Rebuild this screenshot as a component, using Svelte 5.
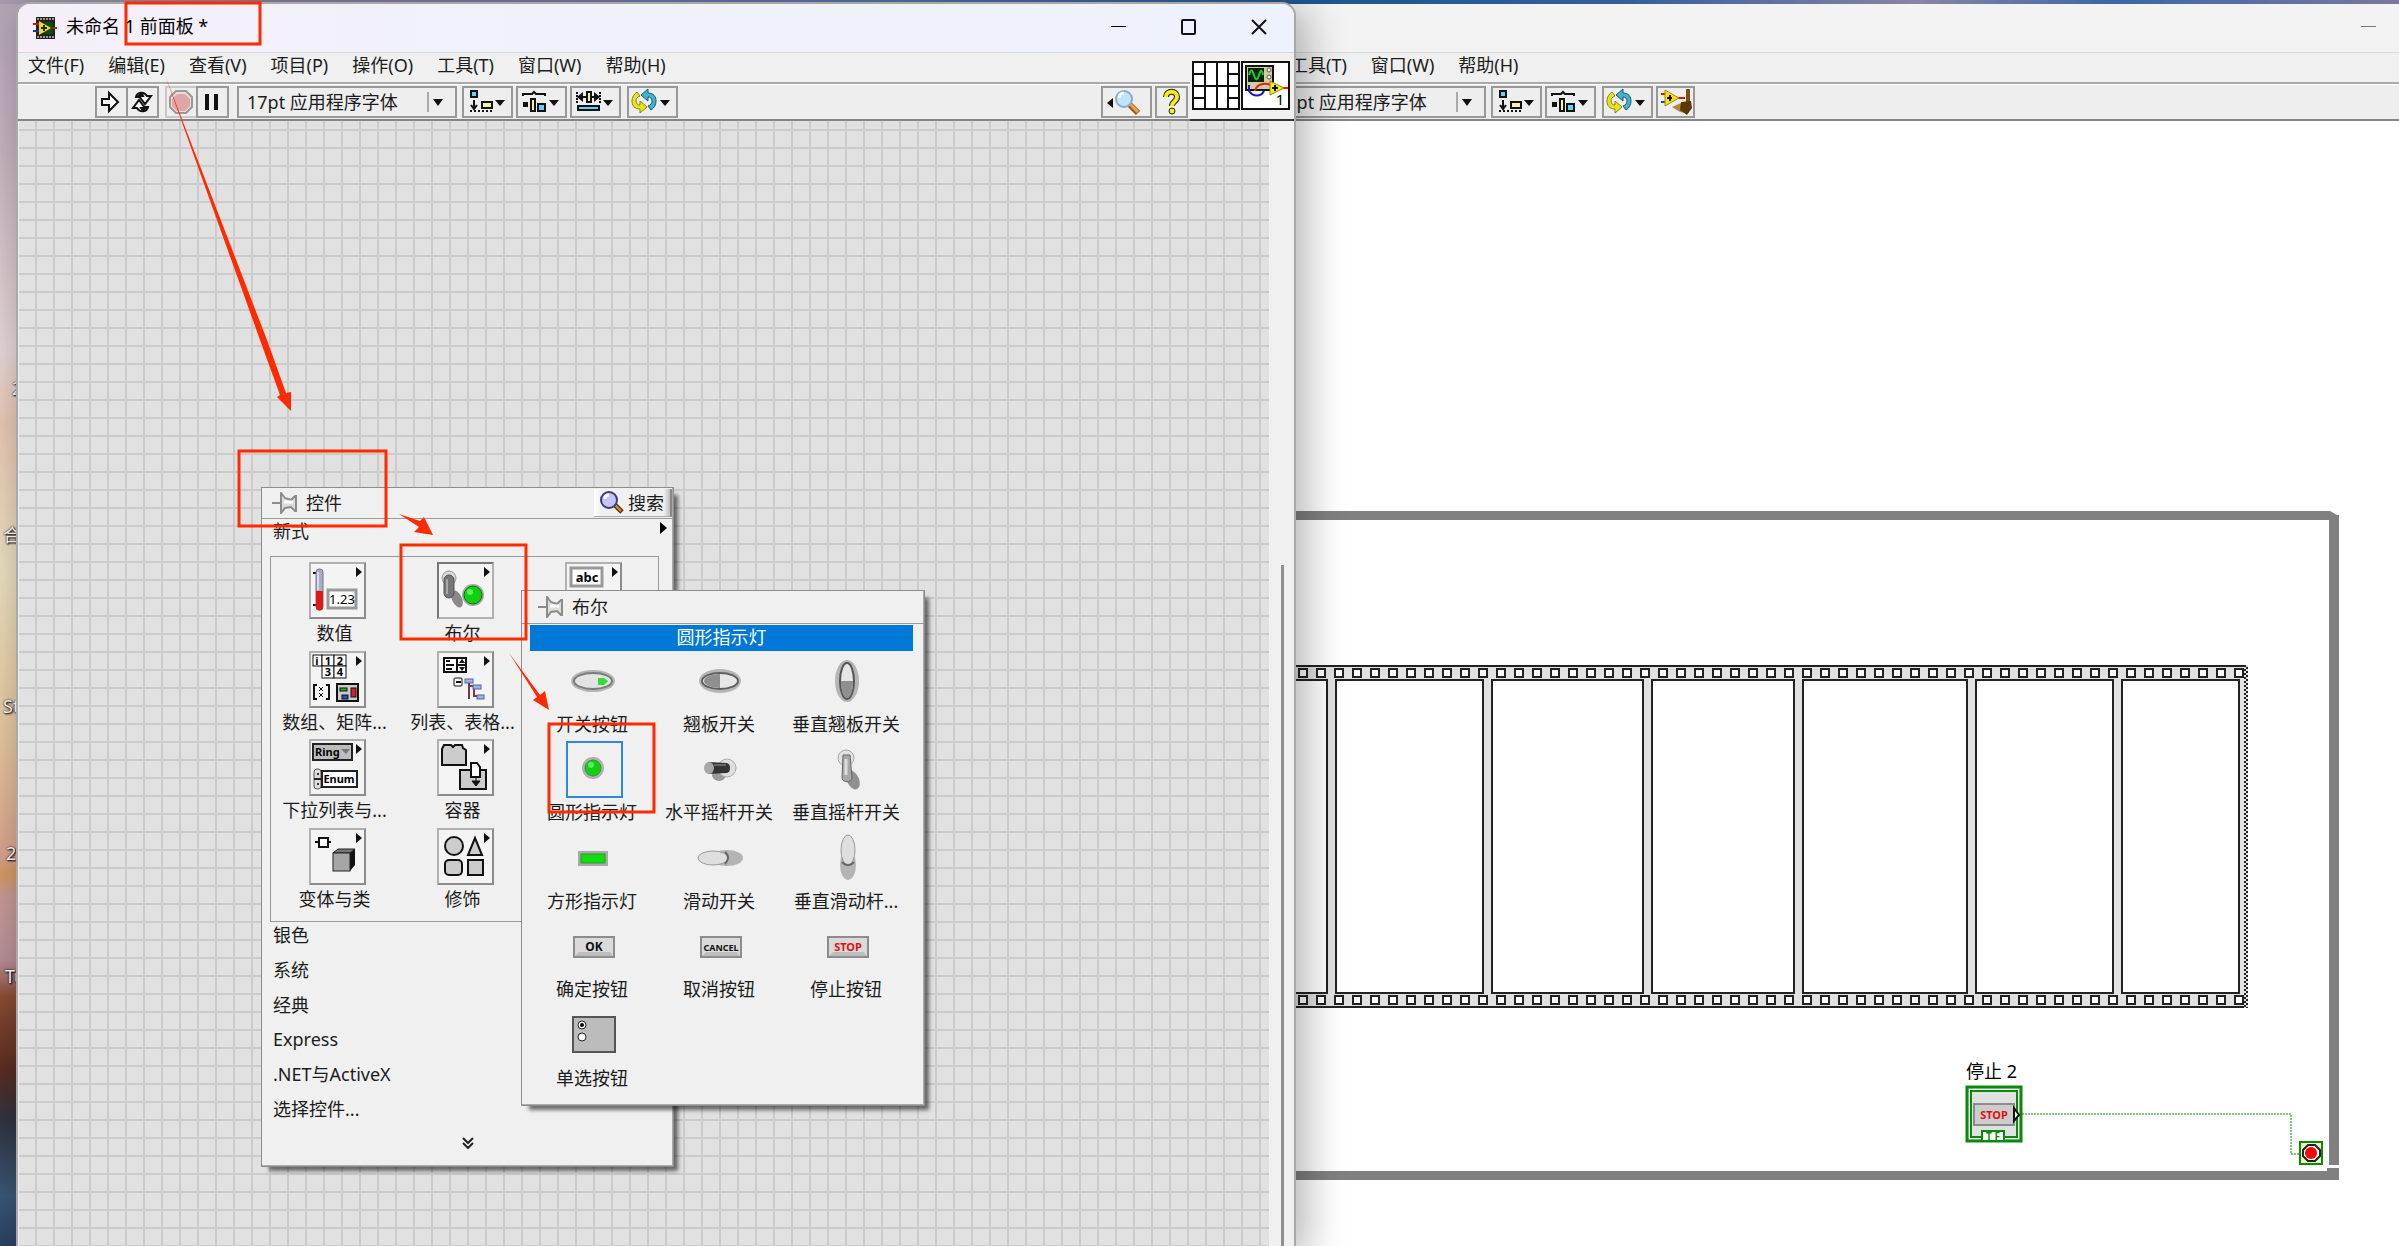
<script>
  const menus = [
    "文件(F)",
    "编辑(E)",
    "查看(V)",
    "项目(P)",
    "操作(O)",
    "工具(T)",
    "窗口(W)",
    "帮助(H)",
  ];
  const diagramMenus = menus.slice(5);

  const desktopLabels = [
    { text: "2", x: 12, y: 378 },
    { text: "合", x: 3, y: 525 },
    { text: "St", x: 3, y: 696 },
    { text: "2", x: 6, y: 843 },
    { text: "Tu", x: 5, y: 966 },
  ];

  const controls = [
    { icon: "numeric", label: "数值" },
    { icon: "boolean", label: "布尔", open: true },
    { icon: "string", label: "" },
    { icon: "array", label: "数组、矩阵..." },
    { icon: "list", label: "列表、表格..." },
    null,
    { icon: "ring", label: "下拉列表与..." },
    { icon: "container", label: "容器" },
    null,
    { icon: "variant", label: "变体与类" },
    { icon: "decor", label: "修饰" },
  ];

  const categories = ["银色", "系统", "经典", "Express", ".NET与ActiveX", "选择控件..."];

  const booleans = [
    { icon: "push", label: "开关按钮" },
    { icon: "rocker", label: "翘板开关" },
    { icon: "vrocker", label: "垂直翘板开关" },
    { icon: "led", label: "圆形指示灯" },
    { icon: "toggle", label: "水平摇杆开关" },
    { icon: "vtoggle", label: "垂直摇杆开关" },
    { icon: "square", label: "方形指示灯" },
    { icon: "slide", label: "滑动开关" },
    { icon: "vslide", label: "垂直滑动杆..." },
    { icon: "ok", label: "确定按钮" },
    { icon: "cancel", label: "取消按钮" },
    { icon: "stop", label: "停止按钮" },
    { icon: "radio", label: "单选按钮" },
  ];
  let selected = $state("led");

  // FILM STRIP
  const holes = Array.from({ length: 53 }, (_, i) => 1299 + i * 18);
  const frames = [
    [1280, 1327],
    [1336, 1483],
    [1492, 1643],
    [1652, 1794],
    [1803, 1967],
    [1976, 2113],
    [2122, 2239],
  ];
</script>

{#snippet toolIcon(name)}
  <svg width="48" height="28" viewBox="0 0 48 28" aria-hidden="true">
    {#if name === "align"}
      <rect x="7" y="3" width="6" height="6" fill="#5fd3f3" stroke="#111" stroke-width="2" />
      <path d="M10 12v8M7 17l3 4 3-4" fill="none" stroke="#111" stroke-width="2" />
      <path d="M6 23h22" stroke="#111" stroke-width="2" stroke-dasharray="2 2" />
      <rect x="18" y="14" width="10" height="6" fill="#f7f39a" stroke="#111" stroke-width="2" />
      <path d="M31 12h10l-5 6z" fill="#111" />
    {:else if name === "distribute"}
      <path d="M5 8v-2h9l2-2 2 2h9v2" fill="none" stroke="#111" stroke-width="2" />
      <rect x="5" y="14" width="5" height="5" fill="#111" />
      <rect x="13" y="11" width="4" height="12" fill="#f7f39a" stroke="#111" stroke-width="2" />
      <rect x="20" y="16" width="7" height="7" fill="#5fd3f3" stroke="#111" stroke-width="2" />
      <path d="M31 12h10l-5 6z" fill="#111" />
    {:else if name === "resize"}
      <path d="M5 4v12M28 4v12" stroke="#111" stroke-width="2" stroke-dasharray="2 1" />
      <path d="M6 9h8M19 9h8" stroke="#111" stroke-width="2" />
      <path d="M5 9l6-5v10zM28 9l-6-5v10z" fill="#111" />
      <rect x="15" y="4" width="4" height="10" fill="#f7f39a" stroke="#111" stroke-width="2" />
      <rect x="6" y="18" width="21" height="4" fill="#5fd3f3" stroke="#111" stroke-width="2" />
      <path d="M31 12h10l-5 6z" fill="#111" />
    {:else if name === "reorder"}
      <path d="M12 7l7-6v4c6 0 8 4 8 8s-2 7-5 9l-3-4c3-1 4-3 4-5 0-3-2-4-4-4v4z" fill="#3fb4d0" stroke="#17566b" />
      <path d="M12 7l7-6v4c6 0 8 4 8 8s-2 7-5 9l-3-4c3-1 4-3 4-5 0-3-2-4-4-4v4z" fill="#e8e419" stroke="#8a850c" transform="rotate(180 15 13)" />
      <path d="M31 12h10l-5 6z" fill="#111" />
    {:else if name === "find"}
      <path d="M4 15l6-5v10z" fill="#111" />
      <path d="M26 16l9 9" stroke="#9a5a20" stroke-width="6" />
      <path d="M26 15l9 9" stroke="#f0a04a" stroke-width="3" />
      <circle cx="21" cy="11" r="8" fill="#bfe5fb" stroke="#8eaac8" stroke-width="2" />
      <path d="M16 10c0-3 2-5 5-5" fill="none" stroke="#fff" stroke-width="3" />
    {/if}
  </svg>
{/snippet}

{#snippet pin()}
  <svg class="pin" width="26" height="22" viewBox="0 0 26 22" aria-hidden="true">
    <path d="M0 11h9" stroke="#8b8b8b" stroke-width="2" />
    <path d="M9 1l4 5 6 2 4-4h1v15h-1l-4-4-6 1-4 5z" fill="#dcdcdc" stroke="#8b8b8b" stroke-width="2" />
    <path d="M12 10h9" stroke="#fff" stroke-width="3" />
  </svg>
{/snippet}

{#snippet controlIcon(name)}
  <svg width="52" height="52" viewBox="0 0 52 52" aria-hidden="true">
    {#if name === "numeric"}
      <path d="M2 9h4M2 41h4" stroke="#111" stroke-width="2" />
      <rect x="5" y="5" width="7" height="41" rx="3" fill="#a9adc4" stroke="#777" />
      <path d="M5 27h7v16a3 3 0 0 1-7 0z" fill="#e01818" />
      <path d="M7 8v18" stroke="#d8dcec" stroke-width="2" />
      <rect x="17" y="26" width="28" height="18" fill="#fff" stroke="#999" stroke-width="3" />
      <text x="31" y="40" font-size="13" text-anchor="middle">1.23</text>
    {:else if name === "boolean"}
      <ellipse cx="18" cy="35" rx="5" ry="9" fill="#8a8a8a" transform="rotate(-25 18 35)" />
      <circle cx="10" cy="14" r="7" fill="#d9d9d9" stroke="#999" />
      <rect x="5" y="11" width="10" height="23" rx="5" fill="#767676" stroke="#555" />
      <path d="M8 15v15" stroke="#a9a9a9" stroke-width="2" />
      <circle cx="34" cy="31" r="11" fill="#a6a6a6" />
      <circle cx="34" cy="31" r="9" fill="#11cf11" stroke="#087808" stroke-width="1" />
      <circle cx="31" cy="28" r="3" fill="#5df05d" />
    {:else if name === "string"}
      <rect x="4" y="4" width="31" height="18" fill="#fff" stroke="#999" stroke-width="3" />
      <text x="20" y="18" font-size="13" font-weight="bold" text-anchor="middle">abc</text>
    {:else if name === "array"}
      <g fill="#fff" stroke="#111" stroke-width="1">
        <rect x="2" y="2" width="9" height="11" /><rect x="11" y="2" width="12" height="11" />
        <rect x="23" y="2" width="12" height="11" /><rect x="11" y="13" width="12" height="12" />
        <rect x="23" y="13" width="12" height="12" />
      </g>
      <g font-size="11" font-weight="bold" text-anchor="middle">
        <text x="6" y="12">i</text><text x="17" y="12">1</text><text x="29" y="12">2</text>
        <text x="17" y="23">3</text><text x="29" y="23">4</text>
      </g>
      <path d="M6 32H3v14h3M15 32h3v14h-3" fill="none" stroke="#111" stroke-width="2" />
      <path d="M8 34l4 4M12 34l-4 4M8 40l4 4M12 40l-4 4" stroke="#111" />
      <rect x="26" y="31" width="21" height="17" fill="#ccc" stroke="#111" stroke-width="2" />
      <rect x="29" y="35" width="7" height="3" fill="#18c018" stroke="#111" />
      <rect x="31" y="42" width="6" height="4" fill="#1652e0" stroke="#111" />
      <rect x="40" y="35" width="5" height="9" fill="#e01830" stroke="#111" />
    {:else if name === "list"}
      <rect x="5" y="5" width="22" height="14" fill="#fff" stroke="#111" stroke-width="2" />
      <path d="M7 8h4M7 12h8M7 16h6M18 5v14M18 12h9" stroke="#111" stroke-width="2" />
      <path d="M20 10l3-4 3 4zM20 14l3 4 3-4z" fill="#111" />
      <rect x="15" y="25" width="8" height="8" rx="1" fill="#fff" stroke="#111" />
      <path d="M17 29h5" stroke="#111" stroke-width="2" />
      <path d="M30 29v17M30 33h5M35 33v10h5" fill="none" stroke="#7a3a3a" stroke-width="2" />
      <rect x="26" y="26" width="8" height="4" fill="#9fb2e8" stroke="#5064a8" />
      <rect x="34" y="32" width="8" height="4" fill="#9fb2e8" stroke="#5064a8" />
      <rect x="38" y="42" width="7" height="4" fill="#9fb2e8" stroke="#5064a8" />
    {:else if name === "ring"}
      <rect x="2" y="3" width="39" height="16" fill="#bdbdbd" stroke="#222" stroke-width="2" />
      <text x="4" y="15" font-size="11" font-weight="bold">Ring</text>
      <path d="M30 8h9l-4 5z" fill="#777" />
      <rect x="3" y="28" width="7" height="20" rx="3" fill="#ddd" stroke="#555" />
      <path d="M3 38h7" stroke="#222" stroke-width="2" /><circle cx="7" cy="33" r="1" /><circle cx="7" cy="43" r="1" />
      <rect x="11" y="30" width="35" height="16" fill="#fff" stroke="#222" stroke-width="2" />
      <text x="28" y="42" font-size="11" font-weight="bold" text-anchor="middle">Enum</text>
    {:else if name === "container"}
      <path d="M3 24V8l2-4h7l2 2 2-2h7l1 3 3 2v15z" fill="#ccc" stroke="#111" stroke-width="2" />
      <rect x="21" y="29" width="26" height="19" fill="#ccc" stroke="#111" stroke-width="2" />
      <path d="M32 22h6l3 4v10h-9z" fill="#fff" stroke="#111" stroke-width="2" />
      <path d="M37 36v5M33 40h8l-4 5z" fill="#111" stroke="#111" />
    {:else if name === "variant"}
      <path d="M4 12h16" stroke="#111" stroke-width="2" />
      <circle cx="5" cy="12" r="1" /><circle cx="19" cy="12" r="1" />
      <rect x="8" y="8" width="9" height="9" fill="#fff" stroke="#111" stroke-width="2" />
      <path d="M22 23l5-4h17l-5 4z" fill="#777" stroke="#222" />
      <path d="M39 23l5-4v16l-5 6z" fill="#111" />
      <rect x="22" y="23" width="17" height="18" fill="#a6a6a6" stroke="#222" />
    {:else if name === "decor"}
      <g fill="#ccc" stroke="#111" stroke-width="2">
        <circle cx="15" cy="16" r="9" />
        <path d="M36 8l7 17H29z" />
        <rect x="6" y="30" width="17" height="15" rx="4" />
        <rect x="29" y="30" width="15" height="15" />
      </g>
    {/if}
    <path d="M45 3v10l6-5z" fill="#111" />
  </svg>
{/snippet}

{#snippet pushButton(text, color, size)}
  <rect x="6" y="17" width="40" height="20" fill="#dadada" stroke="#8c8c8c" stroke-width="2" />
  <path d="M7 36l4-4h31l3 4z" fill="#bdbdbd" />
  <text x="26" y="31" font-size={size} font-weight="bold" text-anchor="middle" fill={color}>{text}</text>
{/snippet}

{#snippet booleanIcon(name)}
  <svg width="53" height="53" viewBox="0 0 53 53" aria-hidden="true">
    {#if name === "push"}
      <ellipse cx="25" cy="26" rx="22" ry="11" fill="#b5b5b5" />
      <ellipse cx="25" cy="26" rx="19" ry="8" fill="#e3e3e3" stroke="#7c7c7c" stroke-width="2" />
      <path d="M30 23h6l4 3-4 4h-6z" fill="#33dd33" />
    {:else if name === "rocker"}
      <ellipse cx="25" cy="26" rx="21" ry="12" fill="#b5b5b5" />
      <ellipse cx="25" cy="26" rx="18" ry="8" fill="#e6e6e6" stroke="#606060" stroke-width="2" />
      <path d="M25 19c-8 0-16 3-16 7s8 7 16 7z" fill="#8f8f8f" />
    {:else if name === "vrocker"}
      <ellipse cx="25" cy="26" rx="12" ry="21" fill="#b5b5b5" />
      <ellipse cx="25" cy="26" rx="7" ry="18" fill="#e6e6e6" stroke="#555" stroke-width="2" />
      <path d="M19 26c0 9 2 17 6 17s6-8 6-17z" fill="#8f8f8f" />
    {:else if name === "led"}
      <circle cx="25" cy="25" r="11" fill="#b0b0b0" />
      <circle cx="25" cy="25" r="8" fill="#10d010" stroke="#4c8a4c" />
      <circle cx="23" cy="22" r="3" fill="#55ef55" />
    {:else if name === "toggle"}
      <ellipse cx="24" cy="32" rx="7" ry="6" fill="#9a9a9a" />
      <circle cx="32" cy="25" r="9" fill="#dedede" stroke="#aaa" />
      <path d="M13 19l19 1c4 1 4 9 0 10l-19 1z" fill="#333" />
      <ellipse cx="14" cy="25" rx="5" ry="6" fill="#a8a8a8" />
      <path d="M19 22h12" stroke="#666" stroke-width="2" />
    {:else if name === "vtoggle"}
      <ellipse cx="31" cy="37" rx="6" ry="10" fill="#909090" transform="rotate(-25 31 37)" />
      <circle cx="24" cy="15" r="8" fill="#e2e2e2" stroke="#aaa" />
      <path d="M21 12h7l2 23c-1 5-9 5-10 0z" fill="#a8a8a8" stroke="#666" />
      <path d="M24 16v16" stroke="#dcdcdc" stroke-width="3" />
    {:else if name === "square"}
      <rect x="10" y="19" width="30" height="15" fill="#aaa" />
      <rect x="13" y="22" width="24" height="9" fill="#10dc10" stroke="#22a022" />
    {:else if name === "slide"}
      <ellipse cx="32" cy="26" rx="16" ry="8" fill="#b4b4b4" />
      <ellipse cx="18" cy="26" rx="15" ry="7" fill="#dedede" stroke="#999" />
      <path d="M30 20c4 3 4 8 0 12" fill="none" stroke="#666" stroke-width="2" />
    {:else if name === "vslide"}
      <ellipse cx="26" cy="33" rx="8" ry="15" fill="#b4b4b4" />
      <ellipse cx="26" cy="18" rx="7" ry="15" fill="#dedede" stroke="#999" />
      <path d="M20 30c3 4 9 4 12 0" fill="none" stroke="#666" stroke-width="2" />
    {:else if name === "ok"}
      {@render pushButton("OK", "#111", 12)}
    {:else if name === "cancel"}
      {@render pushButton("CANCEL", "#111", 9)}
    {:else if name === "stop"}
      {@render pushButton("STOP", "#e01010", 11)}
    {:else if name === "radio"}
      <rect x="5" y="8" width="42" height="35" fill="#bcbcbc" stroke="#555" stroke-width="2" />
      <circle cx="14" cy="16" r="4" fill="#fff" stroke="#222" /><circle cx="14" cy="16" r="2" />
      <circle cx="14" cy="28" r="4" fill="#fff" stroke="#222" />
    {/if}
  </svg>
{/snippet}

{#snippet fontBox(label)}
  <div class="font">
    <select aria-label={label}>
      <option>17pt 应用程序字体</option>
    </select>
    <svg width="28" height="28" viewBox="0 0 28 28" aria-hidden="true">
      <path d="M1 4v20" stroke="#aaa" stroke-width="2" />
      <path d="M6 11h10l-5 7z" fill="#111" />
    </svg>
  </div>
{/snippet}

<div class="desktop">
  {#each desktopLabels as item}
    <span class="shortcut" style="left: {item.x}px; top: {item.y}px">{item.text}</span>
  {/each}

  <section class="window diagram" aria-label="程序框图">
    <header class="titlebar">
      <button class="caption" aria-label="最小化">
        <svg width="16" height="16" viewBox="0 0 16 16"><rect y="7" width="15" height="1" fill="#777" /></svg>
      </button>
    </header>
    <nav class="menubar">
      {#each diagramMenus as menu}
        <button>{menu}</button>
      {/each}
    </nav>
    <div class="toolbar">
      {@render fontBox("字体")}
      <button class="tool" aria-label="对齐对象">{@render toolIcon("align")}</button>
      <button class="tool" aria-label="分布对象">{@render toolIcon("distribute")}</button>
      <button class="tool apart" aria-label="重新排序">{@render toolIcon("reorder")}</button>
      <button class="tool clean" aria-label="整理程序框图">
        <svg width="36" height="28" viewBox="0 0 36 28">
          <path d="M3 6h5M19 10h8" stroke="#e01010" stroke-width="2" /><path d="M3 14h5" stroke="#1040e0" stroke-width="2" />
          <path d="M7 2l14 8-14 8z" fill="#f4e010" stroke="#a09000" />
          <path d="M9 10h5M12 7v6" stroke="#111" stroke-width="2" />
          <path d="M28 1h4v14h-4z" fill="#7a5016" />
          <path d="M14 19l9-4 8 2-4 8-5-1z" fill="#b08840" />
          <path d="M23 14l10-1 1 7-5 7-7-5z" fill="#5a3808" />
        </svg>
      </button>
    </div>
    <div class="sheet">
      <svg width="1109" height="1125" viewBox="1290 121 1109 1125">
        <g fill="#808080">
          <path d="M1290 511h1040l7 4h2v650h-10V520H1290z" />
          <path d="M1290 1171h1037v-3h12v12H1290z" />
        </g>
        <rect x="1280" y="666" width="966" height="341" fill="#e1e1e1" stroke="#222" stroke-width="2" />
        {#each frames as [from, to]}
          <rect x={from} y="680" width={to - from} height="313" fill="#fff" stroke="#222" stroke-width="2" />
        {/each}
        {#each holes as x}
          <rect {x} y="669" width="8" height="8" fill="#fff" stroke="#222" stroke-width="2" />
          <rect {x} y="996" width="8" height="8" fill="#fff" stroke="#222" stroke-width="2" />
        {/each}
        <path d="M2246 665v343" stroke="#e1e1e1" stroke-width="4" />
        <path d="M2245 665v343" stroke="#222" stroke-width="2" stroke-dasharray="2 2" />
        <path d="M2247 667v341" stroke="#222" stroke-width="2" stroke-dasharray="2 2" />

        <text x="1966" y="1078" font-size="18">停止 2</text>
        <rect x="1967" y="1087" width="54" height="54" fill="#e1e1e1" stroke="#0a8a0a" stroke-width="3" />
        <rect x="1970" y="1090" width="48" height="48" fill="none" stroke="#fff" stroke-width="2" />
        <rect x="1971" y="1091" width="46" height="46" fill="none" stroke="#0a8a0a" stroke-width="2" />
        <rect x="1974" y="1104" width="40" height="21" fill="#ccc" stroke="#8c8c8c" stroke-width="2" />
        <text x="1994" y="1119" font-size="11" font-weight="bold" text-anchor="middle" fill="#e01010">STOP</text>
        <path d="M2014 1108v13l5-6z" fill="#fff" stroke="#111" stroke-width="2" />
        <path d="M1982 1141v-10h22v10z" fill="#fff" stroke="#0a8a0a" stroke-width="2" />
        <text x="1993" y="1140" font-size="10" font-weight="bold" text-anchor="middle" fill="#0a8a0a">T F</text>
        <path d="M2022 1114h269v40h8" fill="none" stroke="#0a8a0a" stroke-width="1" stroke-dasharray="2 1" />
        <rect x="2300" y="1142" width="22" height="22" fill="#f7f5c0" stroke="#0a8a0a" stroke-width="2" />
        <path d="M2308 1145h7l5 5v6l-5 5h-7l-5-5v-6z" fill="#fff" stroke="#222" stroke-width="2" />
        <circle cx="2311" cy="1153" r="6" fill="#f00" />
      </svg>
    </div>
  </section>

  <section class="window panel" aria-label="前面板">
    <header class="titlebar">
      <svg width="24" height="22" viewBox="0 0 24 22" aria-hidden="true">
        <rect x="3" y="0" width="19" height="22" fill="#222" />
        <path d="M4 2h17M4 20h17" stroke="#999" stroke-width="2" stroke-dasharray="2 1" />
        <path d="M0 7h6" stroke="#e01010" stroke-width="2" /><path d="M0 14h6" stroke="#1030e0" stroke-width="2" />
        <path d="M18 11h6" stroke="#e01010" stroke-width="2" />
        <path d="M11 5h9v12h-9z" fill="#0c4c10" />
        <path d="M6 4l12 7-12 7z" fill="#f6dc10" />
        <path d="M8 11h6M11 8v6" stroke="#222" stroke-width="2" />
      </svg>
      <h1>未命名 1 前面板 *</h1>
      <button class="caption" aria-label="最小化">
        <svg width="16" height="16" viewBox="0 0 16 16"><rect y="7" width="15" height="1" fill="#000" /></svg>
      </button>
      <button class="caption" aria-label="最大化">
        <svg width="16" height="16" viewBox="0 0 16 16"><rect x="1" y="1" width="13" height="14" rx="1" fill="none" stroke="#111" stroke-width="2" /></svg>
      </button>
      <button class="caption" aria-label="关闭">
        <svg width="16" height="16" viewBox="0 0 16 16"><path d="M1 1l14 14M15 1L1 15" stroke="#111" stroke-width="2" /></svg>
      </button>
    </header>
    <nav class="menubar">
      {#each menus as menu}
        <button>{menu}</button>
      {/each}
    </nav>
    <div class="toolbar">
      <div class="group">
        <button class="tool small" aria-label="运行">
          <svg width="28" height="28" viewBox="0 0 28 28"><path d="M5 11h7V5l9 9-9 9v-6H5z" fill="#fff" stroke="#111" stroke-width="2" /></svg>
        </button>
        <button class="tool small" aria-label="连续运行">
          <svg width="28" height="28" viewBox="0 0 28 28">
            <path d="M8 9c1-5 8-6 11-1h4l-6 8-6-8h4c-1-2-4-2-4 1z" fill="#fff" stroke="#111" stroke-width="2" />
            <path d="M8 9c1-5 8-6 11-1h4l-6 8-6-8h4c-1-2-4-2-4 1z" fill="#fff" stroke="#111" stroke-width="2" transform="rotate(180 14 14)" />
          </svg>
        </button>
      </div>
      <div class="group">
        <button class="tool small faded" aria-label="中止执行">
          <svg width="28" height="28" viewBox="0 0 28 28">
            <path d="M9 3h10l6 6v10l-6 6H9l-6-6V9z" fill="#e9dcdc" stroke="#999" stroke-width="2" />
            <path d="M10 6h8l5 5v7l-5 5h-8l-5-5v-7z" fill="#dea6a6" />
          </svg>
        </button>
        <button class="tool small" aria-label="暂停">
          <svg width="28" height="28" viewBox="0 0 28 28"><path d="M9 6v16M18 6v16" stroke="#111" stroke-width="4" /></svg>
        </button>
      </div>
      {@render fontBox("文本设置")}
      <button class="tool" aria-label="对齐对象">{@render toolIcon("align")}</button>
      <button class="tool" aria-label="分布对象">{@render toolIcon("distribute")}</button>
      <button class="tool" aria-label="调整对象大小">{@render toolIcon("resize")}</button>
      <button class="tool apart" aria-label="重新排序">{@render toolIcon("reorder")}</button>
      <span class="fill"></span>
      <button class="tool" aria-label="查找">{@render toolIcon("find")}</button>
      <button class="tool small" aria-label="帮助">
        <svg width="28" height="28" viewBox="0 0 28 28">
          <path d="M9 9c0-7 11-7 11 0 0 5-5 4-5 9" fill="none" stroke="#222" stroke-width="6" />
          <path d="M9 9c0-7 11-7 11 0 0 5-5 4-5 9" fill="none" stroke="#f6ee10" stroke-width="4" />
          <circle cx="15" cy="23" r="3" fill="#f6ee10" stroke="#222" />
        </svg>
      </button>
    </div>
    <div class="corner">
      <svg width="48" height="49" viewBox="0 0 48 49" aria-hidden="true">
        <rect x="1" y="1" width="46" height="47" fill="#fff" stroke="#111" stroke-width="2" />
        <path d="M13 1v47M25 1v47M36 1v47M1 25h46M1 13h12M1 37h12M36 13h11M36 37h11" stroke="#111" stroke-width="2" />
      </svg>
      <svg width="49" height="49" viewBox="0 0 49 49" aria-hidden="true">
        <rect x="1" y="1" width="47" height="47" fill="#fff" stroke="#111" stroke-width="2" />
        <rect x="5" y="5" width="27" height="24" fill="#d4cc9c" stroke="#111" stroke-width="2" />
        <rect x="7" y="7" width="16" height="14" fill="#04220a" />
        <path d="M8 14c2-6 3-6 5 0s3 6 5 0 3-5 4 0" fill="none" stroke="#18d038" stroke-width="2" />
        <circle cx="28" cy="9" r="2" fill="#fff" stroke="#555" /><circle cx="28" cy="16" r="2" fill="#fff" stroke="#555" />
        <path d="M8 24v6c4 6 12 6 15 0" fill="none" stroke="#1818c0" stroke-width="2" />
        <path d="M14 30c2-8 10-8 16-6M42 27h5" fill="none" stroke="#e02020" stroke-width="2" />
        <path d="M29 20l14 7-14 7z" fill="#f6ee10" stroke="#888010" />
        <path d="M31 27h6M34 24v6" stroke="#111" stroke-width="2" />
        <text x="39" y="44" font-size="15" text-anchor="middle">1</text>
      </svg>
    </div>
    <div class="work">
      <div class="canvas"></div>
      <div class="scroll"></div>
    </div>
  </section>

  <section class="palette controls" aria-label="控件">
    <header>
      {@render pin()}
      <h2>控件</h2>
      <button class="search">
        <svg width="24" height="26" viewBox="0 0 24 26" aria-hidden="true">
          <path d="M14 14l8 8" stroke="#5a3a10" stroke-width="5" /><path d="M15 15l6 6" stroke="#d09040" stroke-width="2" />
          <circle cx="9" cy="10" r="8" fill="#c4c4fa" stroke="#3c3c78" stroke-width="2" />
          <path d="M5 9c0-3 2-4 4-4" fill="none" stroke="#fff" stroke-width="3" />
        </svg>
        搜索
      </button>
    </header>
    <button class="category head">
      新式
      <svg width="7" height="12" viewBox="0 0 7 12" aria-hidden="true"><path d="M0 0v12l7-6z" /></svg>
    </button>
    <div class="grid">
      {#each controls as item}
        {#if item}
          <button class="cell" class:open={item.open} aria-label={item.label || "字符串与路径"}>
            <span class="tile">{@render controlIcon(item.icon)}</span>
            {item.label}
          </button>
        {:else}
          <span></span>
        {/if}
      {/each}
    </div>
    <div class="categories">
      {#each categories as category}
        <button class="category">{category}</button>
      {/each}
    </div>
    <button class="more" aria-label="展开">
      <svg width="12" height="12" viewBox="0 0 12 12"><path d="M1 1l5 5 5-5M1 6l5 5 5-5" fill="none" stroke="#222" stroke-width="2" /></svg>
    </button>
  </section>

  <section class="palette bool" aria-label="布尔">
    <header>
      {@render pin()}
      <h2>布尔</h2>
    </header>
    <p class="current">{booleans.find((b) => b.icon === selected).label}</p>
    <div class="grid">
      {#each booleans as item}
        <button class="cell" class:selected={selected === item.icon} onclick={() => (selected = item.icon)}>
          <span class="tile">{@render booleanIcon(item.icon)}</span>
          {item.label}
        </button>
      {/each}
    </div>
  </section>

  <svg class="marks" width="960" height="840" viewBox="0 0 960 840" aria-hidden="true">
    <g fill="none" stroke="#ff2a00" stroke-width="3">
      <rect x="126" y="3" width="134" height="41" />
      <rect x="239" y="451" width="147" height="75" />
      <rect x="401" y="545" width="125" height="94" />
      <rect x="549" y="724" width="105" height="88" />
    </g>
    <g fill="#ff2a00">
      <path d="M165 75L267 340L286 393L291 392L291 411L277 397L280 395L260 340z" />
      <path d="M399 514L420 521L424 517L433 535L414 532L419 527z" />
      <path d="M509 653L540 695L545 691L549 710L533 700L537 697z" />
    </g>
  </svg>
</div>

<style>
  :global(body) {
    font-family: "Noto Sans", "Noto Sans CJK SC", sans-serif;
    font-size: 18px;
    line-height: 24px;
    color: #1c1c1c;
  }

  button,
  select {
    margin: 0;
    padding: 0;
    border: 0;
    background: none;
    color: inherit;
    font: inherit;
    white-space: nowrap;
  }

  svg {
    display: block;
    flex: none;
  }

  h1,
  h2,
  p {
    margin: 0;
    font-size: 18px;
    font-weight: normal;
  }

  .desktop {
    position: relative;
    height: 100vh;
    overflow: hidden;
    background:
      linear-gradient(90deg, #a89cae 0, #8a7c9c 12%, #5a70aa 36%, #1f5590 55%, #34609a 68%, #8a84a8 80%, #3a68a4 88%, #7c76a0 100%) top / 100% 4px no-repeat,
      linear-gradient(#b4a6b6 0, #c8b2c0 12%, #e6d8d8 28%, #e8c8b4 34%, #ecdfc0 46%, #e4c49c 60%, #d8a08c 69%, #d59a60 70%, #c89a98 72%, #b89098 77%, #8c4c34 80%, #5a2c22 86%, #2f3440 90%, #3a5878 96%, #2a4060 100%);
  }

  .shortcut {
    position: absolute;
    line-height: 20px;
    color: #fff;
    text-shadow: 0 0 2px #000, 1px 1px 2px #000;
  }

  /* WINDOWS */
  .window {
    position: absolute;
    top: 4px;
    bottom: 0;
    display: flex;
    flex-direction: column;
    background: #f0f0f0;
  }

  .panel {
    left: 18px;
    width: 1276px;
    border-radius: 12px 12px 0 0;
    box-shadow: 0 0 0 2px #a8a8a8, 8px 8px 40px 4px rgba(0, 0, 0, 0.3);
  }

  .diagram {
    left: 1250px;
    right: 0;
  }

  .titlebar {
    display: flex;
    align-items: center;
    height: 48px;
    padding-left: 15px;
    border-bottom: 1px solid #d8d8d8;
    background: #f3f3f3;
  }

  .panel .titlebar {
    border-radius: 12px 12px 0 0;
    background: linear-gradient(90deg, #f6eff8, #f0f2fa 40%, #eef2fc);
  }

  .diagram .titlebar {
    justify-content: flex-end;
  }

  .titlebar h1 {
    flex: 1;
    margin-left: 9px;
    padding-bottom: 4px;
    color: #000;
  }

  .caption {
    display: flex;
    align-items: center;
    justify-content: center;
    width: 70px;
    padding-bottom: 3px;
    height: 100%;
    box-sizing: border-box;
  }

  .diagram .caption {
    width: 60px;
  }

  .menubar {
    display: flex;
    align-items: flex-start;
    gap: 24px;
    height: 29px;
    padding-left: 10px;
    border-bottom: 2px solid #aaa;
  }

  .menubar button {
    height: 24px;
  }

  .diagram .menubar {
    padding-left: 40px;
  }

  .toolbar {
    display: flex;
    align-items: center;
    gap: 3px;
    height: 34px;
    padding: 0 106px 0 77px;
    border-top: 1px solid #fff;
    border-bottom: 2px solid #858585;
    background: #eee;
  }

  .diagram .toolbar {
    padding: 0 0 0 14px;
  }

  .group {
    display: flex;
    margin-right: 3px;
  }

  .group .tool + .tool {
    margin-left: -2px;
  }

  .tool {
    display: flex;
    align-items: center;
    width: 51px;
    height: 32px;
    box-sizing: border-box;
    border: 2px solid #989898;
    overflow: hidden;
  }

  .small {
    width: 33px;
  }

  .clean {
    width: 39px;
  }

  .faded {
    border-color: #c8c8c8;
  }

  .apart {
    margin-left: 3px;
  }

  .fill {
    flex: 1;
  }

  .font {
    display: flex;
    align-items: center;
    width: 220px;
    height: 32px;
    box-sizing: border-box;
    margin: 0 2px;
    border: 2px solid #989898;
  }

  .font select {
    flex: 1;
    min-width: 0;
    padding-left: 8px;
    appearance: none;
  }

  .corner {
    position: absolute;
    top: 57px;
    right: 0;
    display: flex;
    gap: 1px;
    height: 58px;
    padding: 0 4px 0 2px;
    border-bottom: 2px solid #333;
    background: #f0f0f0;
  }

  .work {
    display: flex;
    flex: 1;
  }

  .canvas {
    flex: 1;
    margin-left: 1px;
    background:
      linear-gradient(90deg, #cbcbcb 2px, transparent 2px) 16px 0 / 18px 18px,
      linear-gradient(#cbcbcb 2px, transparent 2px) 0 8px / 18px 18px,
      #e1e1e1;
  }

  .scroll {
    width: 25px;
    background: linear-gradient(#8f8f8f, #8f8f8f) 12px 444px / 3px 100% no-repeat;
  }

  .sheet {
    display: flex;
    flex: 1;
    justify-content: flex-end;
    overflow: hidden;
    background: #fff;
  }

  /* PALETTES */
  .palette {
    position: absolute;
    box-sizing: border-box;
    border: 1px solid #8c8c8c;
    background: #f0f0f0;
    box-shadow: inset -1px -1px #aaa, 6px 6px 4px -2px rgba(0, 0, 0, 0.55);
  }

  .palette header {
    display: flex;
    align-items: center;
    height: 30px;
    border-bottom: 1px solid #999;
  }

  .controls {
    top: 487px;
    left: 261px;
    width: 413px;
    height: 680px;
  }

  .bool {
    top: 590px;
    left: 521px;
    width: 404px;
    height: 516px;
  }

  .bool header {
    height: 32px;
  }

  .pin {
    margin: 0 8px 0 10px;
  }

  .bool .pin {
    margin-left: 16px;
  }

  .search {
    display: flex;
    align-items: center;
    gap: 4px;
    height: 28px;
    margin-left: auto;
    margin-right: 1px;
    padding: 0 6px;
    border-right: 2px solid #888;
    border-bottom: 1px solid #aaa;
    background: linear-gradient(90deg, #fff, #f0f0f0 10%, #f0f0f0 92%, #bbb);
  }

  .category {
    display: flex;
    align-items: center;
    padding: 0 11px;
  }

  .head {
    justify-content: space-between;
    width: 100%;
    height: 24px;
    padding-right: 6px;
  }

  .head svg {
    margin-bottom: 6px;
  }

  .grid {
    display: grid;
    grid-auto-rows: 1fr;
  }

  .controls .grid {
    grid-template-columns: repeat(3, 128px);
    height: 366px;
    margin: 13px 14px 0 8px;
    padding: 5px 0 5px 1px;
    box-sizing: border-box;
    border: 1px solid #999;
  }

  .bool .grid {
    grid-template-columns: repeat(3, 127px);
    height: 442px;
    margin: 2px 8px 0;
  }

  .cell {
    display: flex;
    flex-direction: column;
    align-items: center;
    gap: 2px;
    padding-right: 3px;
  }

  .tile {
    box-sizing: border-box;
    width: 57px;
    height: 57px;
    margin-left: 5px;
    border: 2px solid transparent;
  }

  .controls .tile {
    border-color: #b0b0b0 #8c8c8c #8c8c8c #b0b0b0;
    background: #f4f4f4;
  }

  .controls .open .tile {
    border-color: #777 #b0b0b0 #b0b0b0 #777;
  }

  .selected .tile {
    border-color: #2a8ae0;
  }

  .categories {
    display: grid;
    grid-auto-rows: 1fr;
    height: 208px;
    margin-top: -4px;
  }

  .more {
    display: flex;
    align-items: center;
    justify-content: center;
    width: 100%;
    height: 34px;
  }

  .current {
    height: 26px;
    margin: 1px 11px 0 8px;
    background: #0078d7;
    color: #fff;
    text-align: center;
  }

  .marks {
    position: absolute;
    top: 0;
    left: 0;
    pointer-events: none;
  }
</style>
